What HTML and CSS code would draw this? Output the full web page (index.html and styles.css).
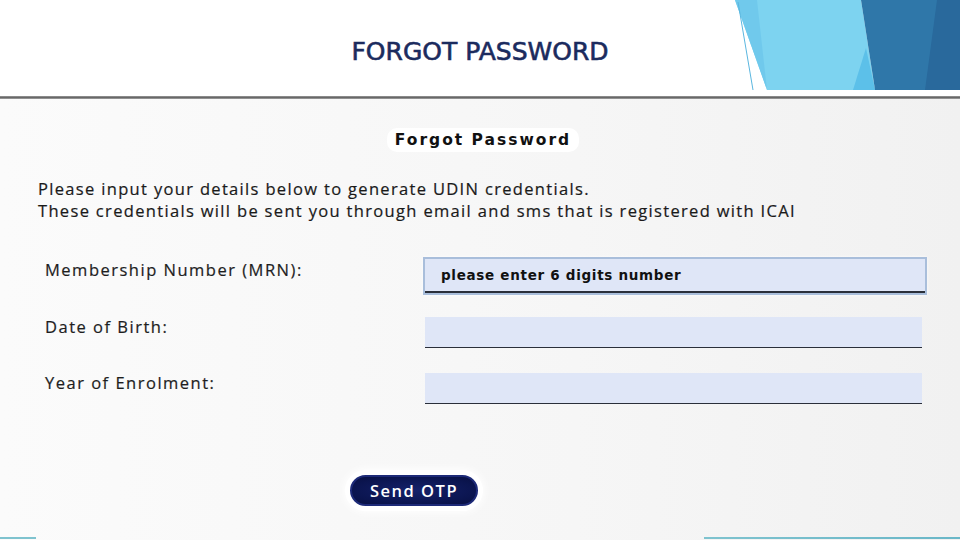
FILE: index.html
```html
<!DOCTYPE html>
<html lang="en">
<head>
<meta charset="utf-8">
<title>Forgot Password</title>
<link rel="stylesheet" href="styles.css">
</head>
<body>
<div class="slide">
  <header class="slide-header">
    <h1 class="slide-title">FORGOT PASSWORD</h1>
    <svg class="corner-art" viewBox="0 0 225 90" width="225" height="90" aria-hidden="true">
      <polygon points="0,0 126,0 140,90 32,90" fill="#7dd3f0"/>
      <polygon points="0,0 22,0 32,90" fill="#70c9ec"/>
      <polygon points="118,90 140,90 131,48" fill="#5cc0e9"/>
      <polygon points="126,0 225,0 225,90 140,90" fill="#2f77a9"/>
      <polygon points="202,0 225,0 225,90 190,90" fill="#29699c"/>
      <line x1="3" y1="2" x2="18" y2="90" stroke="#5ab6df" stroke-width="1"/>
    </svg>
  </header>
  <div class="divider"></div>
  <section class="shot">
    <h2 class="shot-title">Forgot Password</h2>
    <p class="intro">Please input your details below to generate UDIN credentials.<br>These credentials will be sent you through email and sms that is registered with ICAI</p>
    <div class="form">
      <label class="form-label row-1">Membership Number (MRN):</label>
      <div class="field field-active"><span class="placeholder">please enter 6 digits number</span></div>
      <label class="form-label row-2">Date of Birth:</label>
      <div class="field field-plain row-2"></div>
      <label class="form-label row-3">Year of Enrolment:</label>
      <div class="field field-plain row-3"></div>
    </div>
    <div class="actions">
      <button class="otp-btn" type="button">Send OTP</button>
    </div>
    <div class="bottom-rule"></div>
  </section>
</div>
</body>
</html>
```

FILE: styles.css
```css
* { box-sizing: border-box; }
html, body { margin: 0; padding: 0; }
body {
  width: 960px;
  height: 540px;
  overflow: hidden;
  background: #ffffff;
  font-family: "Open Sans", "Noto Sans", sans-serif;
}
.slide {
  width: 960px;
  height: 540px;
  display: flex;
  flex-direction: column;
}
.slide-header {
  position: relative;
  height: 90px;
  flex: none;
  display: flex;
  justify-content: center;
}
.slide-title {
  margin: 36px 0 0 0;
  font-family: "DejaVu Sans", sans-serif;
  font-weight: normal;
  font-size: 25px;
  line-height: 32px;
  height: 32px;
  color: #1b2b5e;
  -webkit-text-stroke: 0.6px #1b2b5e;
  letter-spacing: 0;
}
.corner-art {
  position: absolute;
  top: 0;
  left: 735px;
  display: block;
}
.divider {
  flex: none;
  height: 3px;
  margin-top: 6px;
  background: linear-gradient(to bottom, #9a9a9a, #5e5e5e 60%, #b5b5b5);
}
.shot {
  flex: 1;
  background: linear-gradient(to right, #fbfbfb 0%, #f6f6f6 60%, #f1f1f1 100%);
  padding-top: 29px;
  display: flex;
  flex-direction: column;
}
.shot-title {
  align-self: center;
  margin: 0 0 0 6px;
  padding: 0 8px;
  height: 24px;
  line-height: 24px;
  font-family: "DejaVu Sans", sans-serif;
  font-weight: bold;
  font-size: 15.5px;
  letter-spacing: 2px;
  color: #111111;
  background: #ffffff;
  border-radius: 10px;
}
.intro {
  margin: 26px 0 0 38px;
  font-size: 16.5px;
  letter-spacing: 1.33px;
  line-height: 22px;
  color: #1a1a1a;
  -webkit-text-stroke: 0.2px #1a1a1a;
}
.form {
  margin: 35px 0 0 45px;
  display: grid;
  grid-template-columns: 380px 500px;
  grid-template-rows: 38px 31px 31px;
  row-gap: 22px;
}
.form .row-3 { margin-top: 3px; }
.form-label {
  font-size: 16.5px;
  letter-spacing: 1.5px;
  line-height: 20px;
  color: #1e1e1e;
  -webkit-text-stroke: 0.2px #1e1e1e;
}
.row-1 { padding-top: 3px; }
.field {
  background: #dfe6f7;
}
.field-active {
  margin-left: -2px;
  width: 504px;
  height: 38px;
  border: 2px solid #a9bedb;
  box-shadow: inset 0 -2px 0 #2a2f3a, 0 0 3px rgba(255,255,255,0.9);
  padding-left: 16px;
  display: flex;
  align-items: center;
}
.placeholder {
  font-family: "DejaVu Sans", sans-serif;
  font-weight: bold;
  font-size: 13.5px;
  letter-spacing: 0.7px;
  color: #111111;
  padding-bottom: 2px;
}
.field-plain {
  width: 497px;
  height: 31px;
  border-bottom: 1px solid #2a2f3a;
}
.actions {
  margin: 74px 0 0 350px;
}
.otp-btn {
  width: 128px;
  height: 31px;
  border-radius: 16px;
  border: 2px solid #1d2a78;
  background: radial-gradient(ellipse at center, #15216a 0%, #0b1550 70%, #091042 100%);
  color: #ffffff;
  font-family: "Open Sans", sans-serif;
  font-weight: 600;
  font-size: 16.5px;
  letter-spacing: 1.5px;
  line-height: 26px;
  padding: 0;
  box-shadow: 0 0 0 5px #ffffff, 0 0 8px 6px #ffffff;
}
.bottom-rule {
  margin-top: auto;
  height: 2px;
  margin-bottom: 1px;
  background: linear-gradient(to right, #7fc3cf 0, #7fc3cf 36px, transparent 36px, transparent 704px, #7fc3cf 704px, #6ab7c8 100%);
}
```
